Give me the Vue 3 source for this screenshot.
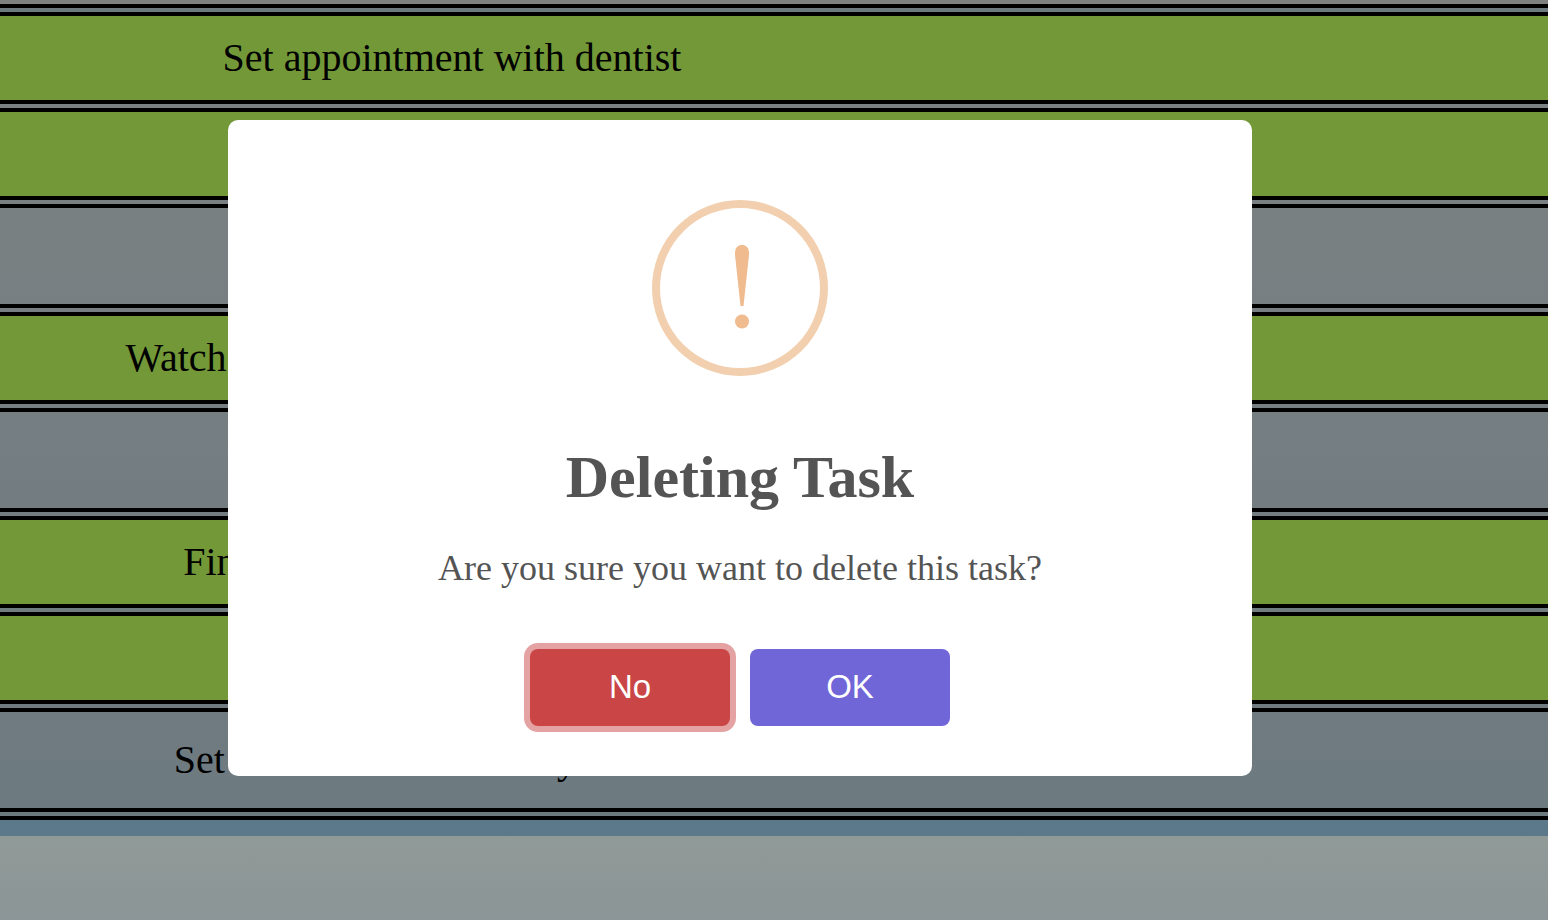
<script setup>
import { ref } from 'vue'

const tasks = ref([
  { id: 1, label: 'Set appointment with dentist', highlighted: true },
  { id: 2, label: 'Buy groceries', highlighted: true },
  { id: 3, label: 'Call the bank', highlighted: false },
  { id: 4, label: 'Watch the new episode of the series later', highlighted: true },
  { id: 5, label: 'Water the plants', highlighted: false },
  { id: 6, label: 'Finish reading the second chapter', highlighted: true },
  { id: 7, label: 'Clean the kitchen', highlighted: true },
  { id: 8, label: 'Set reminder for delivery at school', highlighted: false },
])
const confirming = ref(true)

function removeTask() {
  tasks.value.shift()
  confirming.value = false
}
</script>

<template>
  <div class="page">
    <main class="board">
      <ul class="tasks">
        <li
          v-for="task in tasks"
          :key="task.id"
          class="task"
          :class="{ highlighted: task.highlighted }"
        >
          <span class="label">{{ task.label }}</span>
        </li>
      </ul>
    </main>
    <footer class="footer"></footer>

    <div v-if="confirming" class="overlay">
      <section
        class="dialog"
        role="alertdialog"
        aria-modal="true"
        aria-labelledby="dialog-title"
        aria-describedby="dialog-text"
      >
        <svg class="icon" viewBox="0 0 176 176" aria-hidden="true">
          <circle cx="88" cy="88" r="84" fill="none" stroke="#f2cfae" stroke-width="8" />
          <path d="M83 55C82.500 48 85.500 45 90 45S97.500 48 97 55L91.500 106H88.500Z" fill="#f0bc8f" />
          <circle cx="90" cy="121.500" r="7" fill="#f0bc8f" />
        </svg>
        <h2 id="dialog-title" class="title">Deleting Task</h2>
        <p id="dialog-text" class="text">Are you sure you want to delete this task?</p>
        <div class="actions">
          <button type="button" class="button cancel" @click="confirming = false">No</button>
          <button type="button" class="button accept" @click="removeTask">OK</button>
        </div>
      </section>
    </div>
  </div>
</template>

<style>
body {
  margin: 0;
}
</style>

<style scoped>
.page {
  display: flex;
  flex-direction: column;
  min-height: 100vh;
  overflow: hidden;
  font-family: "Liberation Serif", "Times New Roman", serif;
  color: #000;
}

.board {
  padding: 4px 0 16px;
  background: linear-gradient(#7f8181, #7f8181) top / 100% 4px no-repeat, #5b798b;
}

.tasks {
  margin: 0;
  padding: 0;
  list-style: none;
  border-top: 12px double #000;
  background: linear-gradient(#7d8283, #6d7a80);
}

.task {
  padding: 24px 0;
  border-bottom: 12px double #000;
}

.highlighted {
  padding: 18px 0;
  background: #739838;
  background-clip: padding-box;
}

.label {
  display: block;
  width: 58.4%;
  font-size: 40px;
  line-height: 48px;
  text-align: center;
}

.footer {
  flex: 1;
  background: linear-gradient(#909a97, #8c9597);
}

.overlay {
  position: fixed;
  inset: 0;
  display: flex;
  align-items: flex-start;
  justify-content: center;
  padding: 120px 68px 24px 0;
}

.dialog {
  box-sizing: border-box;
  display: flex;
  flex-direction: column;
  align-items: center;
  width: 100%;
  max-width: 1024px;
  padding: 80px 40px 50px;
  border-radius: 10px;
  background: #fff;
  color: #545454;
  text-align: center;
}

.icon {
  width: 176px;
  height: 176px;
}

.title {
  margin: 65px 0 0;
  font-size: 60px;
  line-height: 72px;
}

.text {
  margin: 33px 0 0;
  font-size: 36px;
  line-height: 44px;
}

.actions {
  display: flex;
  gap: 20px;
  margin-top: 59px;
}

.button {
  width: 200px;
  height: 77px;
  padding: 0 0 2px;
  border: 0;
  border-radius: 8px;
  color: #fff;
  font-family: "Liberation Sans", Arial, sans-serif;
  font-size: 33px;
  cursor: pointer;
}

.cancel {
  background: #ca4646;
  box-shadow: 0 0 0 6px #e4a2a3;
}

.accept {
  background: #7066d8;
}
</style>
